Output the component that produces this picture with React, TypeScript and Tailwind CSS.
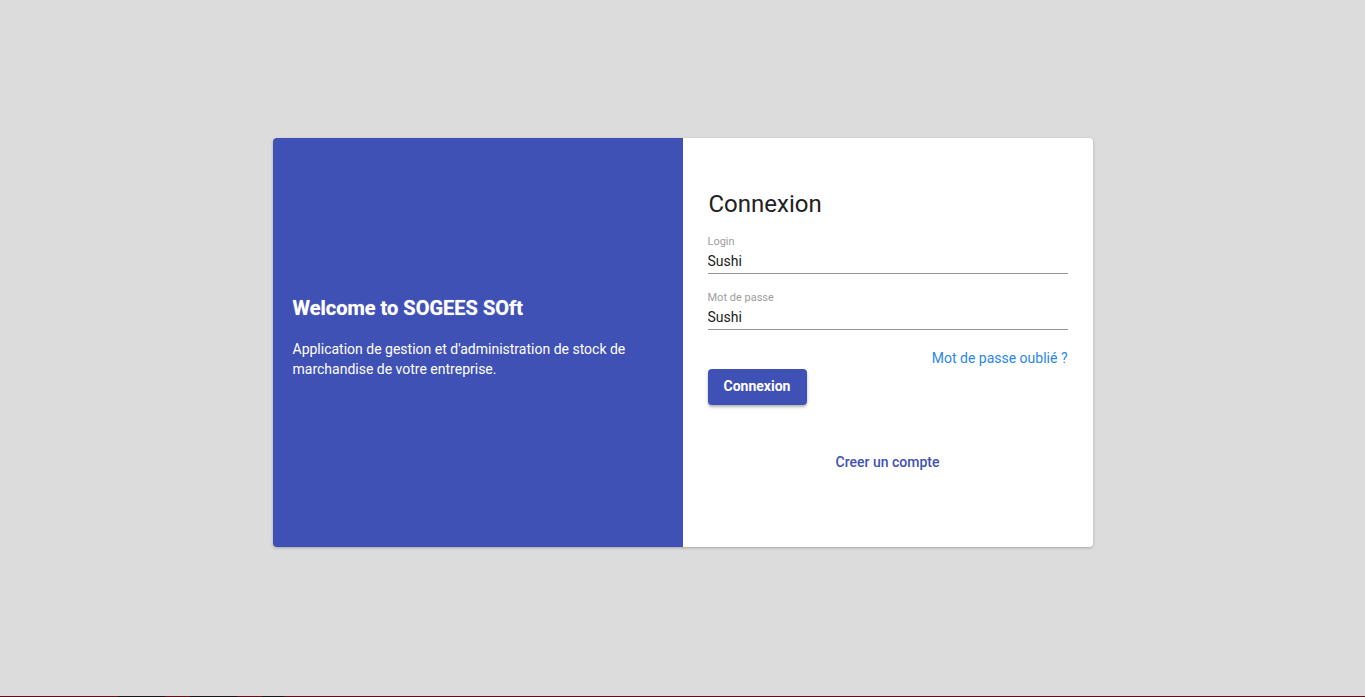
import { useState } from "react";

const Field = ({ label, value }: { label: string; value: string }) => {
  const [val, setVal] = useState(value);
  return (
    <div className="flex flex-col">
      <label className="text-[11px] leading-[14px] text-[#9e9e9e]">{label}</label>
      <input
        type="text"
        value={val}
        onChange={(e) => setVal(e.target.value)}
        className="mt-[1px] h-[24px] border-b border-[#949494] bg-transparent p-0 pb-[2px] text-[14px] leading-[20px] text-[#212121] outline-none"
      />
    </div>
  );
};

export default function App() {
  return (
    <div className="flex h-screen flex-col bg-[#dcdcdc] font-['Roboto',sans-serif]">
      <div className="flex flex-1 justify-center pt-[138px]">
        <div className="flex h-[409px] w-[820px] overflow-hidden rounded-[4px] shadow-[0_1px_3px_rgba(0,0,0,0.25)]">
          {/* left side */}
          <div className="w-[410px] bg-[#3f51b5] px-[20px] pt-[156px] text-white">
            <h1 className="text-[20px] font-bold leading-[28px] [text-shadow:0_0_1px_rgba(255,255,255,0.6)]">
              Welcome to SOGEES SOft
            </h1>
            <p className="mt-[17px] text-[14px] leading-[20px]">
              Application de gestion et d'administration de stock de marchandise de votre entreprise.
            </p>
          </div>

          {/* right side */}
          <div className="flex flex-1 flex-col bg-white px-[25px] pt-[50px]">
            <h2 className="pl-px text-[24px] leading-[32px] text-[#212121]">Connexion</h2>
            <div className="mt-[15px]">
              <Field label="Login" value="Sushi" />
            </div>
            <div className="mt-[17px]">
              <Field label="Mot de passe" value="Sushi" />
            </div>
            <div className="mt-[18px] flex justify-end">
              <a href="#" className="text-[14px] leading-[20px] text-[#2b87e8]">
                Mot de passe oublié ?
              </a>
            </div>
            <div className="mt-[1px]">
              <button className="flex h-[36px] w-[99px] items-center justify-center rounded-[4px] bg-[#3f51b5] pb-[2px] text-[14px] font-bold text-white shadow-[0_2px_3px_rgba(0,0,0,0.3)]">
                Connexion
              </button>
            </div>
            <div className="mt-[47px] flex justify-center">
              <a href="#" className="text-[14px] font-medium leading-[20px] text-[#3f51b5]">
                Creer un compte
              </a>
            </div>
          </div>
        </div>
      </div>
      <div className="flex h-px">
        <div className="w-[118px] bg-[#5c1216]" />
        <div className="w-[47px] bg-[#1c1416]" />
        <div className="w-[25px] bg-[#5c1216]" />
        <div className="w-[47px] bg-[#1c1416]" />
        <div className="w-[25px] bg-[#5c1216]" />
        <div className="w-[22px] bg-[#1c1416]" />
        <div className="flex-1 bg-[#5c1216]" />
      </div>
    </div>
  );
}
